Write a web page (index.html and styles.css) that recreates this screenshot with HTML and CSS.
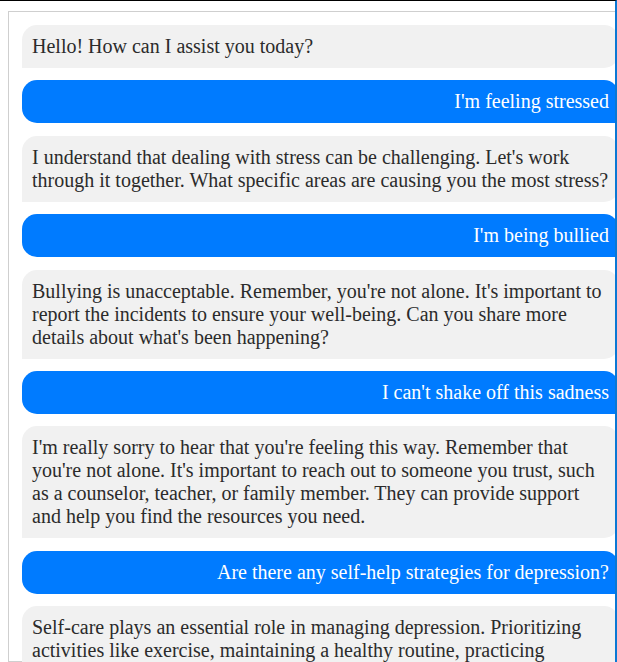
FILE: index.html
```html
<!DOCTYPE html>
<html lang="en">
<head>
<meta charset="utf-8">
<title>Chat</title>
<link rel="stylesheet" href="styles.css">
</head>
<body>
<div class="frame">
  <div class="chat">
    <div class="msg bot">Hello! How can I assist you today?</div>
    <div class="msg user">I'm feeling stressed</div>
    <div class="msg bot">I understand that dealing with stress can be challenging. Let's work through it together. What specific areas are causing you the most stress?</div>
    <div class="msg user">I'm being bullied</div>
    <div class="msg bot">Bullying is unacceptable. Remember, you're not alone. It's important to report the incidents to ensure your well-being. Can you share more details about what's been happening?</div>
    <div class="msg user">I can't shake off this sadness</div>
    <div class="msg bot">I'm really sorry to hear that you're feeling this way. Remember that you're not alone. It's important to reach out to someone you trust, such as a counselor, teacher, or family member. They can provide support and help you find the resources you need.</div>
    <div class="msg user">Are there any self-help strategies for depression?</div>
    <div class="msg bot">Self-care plays an essential role in managing depression. Prioritizing activities like exercise, maintaining a healthy routine, practicing mindfulness, and getting enough sleep can make a real difference. Reaching out to others is also important.</div>
  </div>
</div>
</body>
</html>
```

FILE: styles.css
```css
html, body {
  margin: 0;
  padding: 0;
  background: #fff;
  overflow: hidden;
}

.frame {
  box-sizing: border-box;
  width: 617px;
  height: 662px;
  border-top: 1px solid #000;
  border-right: 2px solid #0a78d4;
  overflow: hidden;
  padding: 10px 0 0 8px;
}

.chat {
  box-sizing: border-box;
  width: 612px;
  height: 651px;
  border: 1px solid #cfcfcf;
  padding: 13px 0 13px 13px;
  display: flex;
  flex-direction: column;
  gap: 12.4px;
  font-family: "Liberation Serif", "Times New Roman", serif;
  font-size: 20px;
  color: #2b2b2b;
}

.msg {
  padding: 10px;
  line-height: 23px;
  flex: none;
}

.bot {
  background: #f1f1f1;
  border-radius: 15px 15px 15px 0;
}

.user {
  background: #007bff;
  color: #fff;
  text-align: right;
  border-radius: 15px 15px 0 15px;
}
```
